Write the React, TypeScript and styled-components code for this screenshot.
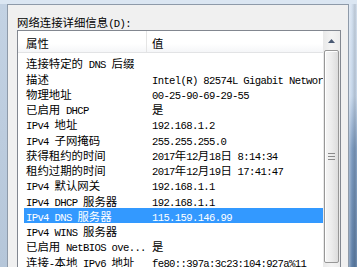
import React from 'react';
import styled, { createGlobalStyle } from 'styled-components';

const GlobalStyle = createGlobalStyle`
  html, body {
    margin: 0;
    padding: 0;
    overflow: hidden;
  }
  body {
    background: #c4d3e4;
  }
  * {
    box-sizing: border-box;
  }
`;

const Frame = styled.div`
  width: 357px;
  height: 267px;
  overflow: hidden;
  display: flex;
  padding: 4px 0 0 7px;
  background: linear-gradient(180deg, #dbe6f2 0, #dbe6f2 4px, #c3d2e3 4px, #b5c6d9 100%);
`;

const Dialog = styled.div`
  flex: 0 0 342px;
  min-width: 0;
  overflow: hidden;
  display: flex;
  flex-direction: column;
  padding: 10px 7px 0 9px;
  background: #f0f0f0;
  border: 1px solid #8e9aa9;
  border-bottom: none;
`;

const RightEdge = styled.div`
  flex: 1;
  background:
    linear-gradient(90deg, rgba(255, 255, 255, 0.35) 0, rgba(255, 255, 255, 0) 3px, rgba(0, 0, 0, 0.12) 6px, rgba(255, 255, 255, 0.1) 8px),
    linear-gradient(180deg, #d3e0ef 0, #c5d6ea 35%, #7e9cc1 55%, #5f80a8 100%);
`;

const Label = styled.div`
  height: 14px;
  line-height: 14px;
  margin-bottom: 1px;
  color: #000;
  white-space: nowrap;
`;

const ListBox = styled.div`
  display: flex;
  width: 100%;
  height: 250px;
  border: 1px solid #828790;
  background: #fff;
`;

const ListContent = styled.div`
  flex: 1;
  width: 0;
  min-width: 0;
  overflow: hidden;
  display: flex;
  flex-direction: column;
`;

const Header = styled.div`
  display: flex;
  height: 22px;
  border-bottom: 1px solid #e2e3e5;
  background: linear-gradient(180deg, #ffffff 0, #ffffff 60%, #f5f6f8 100%);
`;

const HeaderCell = styled.div<{ $width?: number; $pad: number }>`
  ${(p) => (p.$width ? `width: ${p.$width}px;` : 'flex: 1;')}
  padding: 2px 0 0 ${(p) => p.$pad}px;
  line-height: 19px;
  white-space: nowrap;
  border-right: ${(p) => (p.$width ? '1px solid #e5e5e5' : 'none')};
`;

const Rows = styled.div`
  padding-top: 2.4px;
`;

const Row = styled.div<{ $selected?: boolean }>`
  display: flex;
  height: 15.25px;
  line-height: 15.25px;
  margin-left: 6px;
  white-space: nowrap;
  overflow: hidden;
  color: ${(p) => (p.$selected ? '#fff' : '#000')};
  background: ${(p) => (p.$selected ? '#3399ff' : 'transparent')};
`;

const PropCell = styled.div`
  flex: 0 0 122px;
  padding-left: 2px;
  overflow: hidden;
`;

const ValueCell = styled.div`
  flex: 1;
  min-width: 0;
  padding-left: 6px;
  overflow: hidden;
`;

const Han = styled.span`
  font-family: 'Noto Sans CJK SC', sans-serif;
  font-size: 11.4px;
`;

const Lat = styled.span`
  font-family: 'Liberation Mono', monospace;
  font-size: 10.6px;
  letter-spacing: -0.65px;
`;

const ScrollBar = styled.div`
  flex: 0 0 17px;
  display: flex;
  flex-direction: column;
  background: linear-gradient(90deg, #e9e9e9 0, #f3f3f3 50%, #ececec 100%);
`;

const ArrowButton = styled.div`
  height: 17px;
  display: flex;
  align-items: center;
  justify-content: center;
  padding-top: 3px;
`;

const Thumb = styled.div`
  height: 213px;
  margin: 2px 1px 0 1px;
  display: flex;
  align-items: center;
  justify-content: center;
  border: 1px solid #979797;
  border-radius: 2px;
  background: linear-gradient(90deg, #f6f6f6 0, #ececec 50%, #dcdcdc 100%);
  box-shadow: inset 1px 1px 0 #ffffff;
`;

const Txt = ({ children }: { children: string }) => (
  <>
    {children.split(/([\u3000-\u9fff\uff00-\uffef]+)/).map((part, i) =>
      part === '' ? null : /[\u3000-\u9fff\uff00-\uffef]/.test(part) ? (
        <Han key={i}>{part}</Han>
      ) : (
        <Lat key={i}>{part}</Lat>
      )
    )}
  </>
);

const details: { prop: string; value: string }[] = [
  { prop: '连接特定的 DNS 后缀', value: '' },
  { prop: '描述', value: 'Intel(R) 82574L Gigabit Network Connection' },
  { prop: '物理地址', value: '00-25-90-69-29-55' },
  { prop: '已启用 DHCP', value: '是' },
  { prop: 'IPv4 地址', value: '192.168.1.2' },
  { prop: 'IPv4 子网掩码', value: '255.255.255.0' },
  { prop: '获得租约的时间', value: '2017年12月18日 8:14:34' },
  { prop: '租约过期的时间', value: '2017年12月19日 17:41:47' },
  { prop: 'IPv4 默认网关', value: '192.168.1.1' },
  { prop: 'IPv4 DHCP 服务器', value: '192.168.1.1' },
  { prop: 'IPv4 DNS 服务器', value: '115.159.146.99' },
  { prop: 'IPv4 WINS 服务器', value: '' },
  { prop: '已启用 NetBIOS ove...', value: '是' },
  { prop: '连接-本地 IPv6 地址', value: 'fe80::397a:3c23:104:927a%11' },
];

const SELECTED = 10;

export default function App() {
  return (
    <>
      <GlobalStyle />
      <Frame>
        <Dialog>
          <Label>
            <Txt>网络连接详细信息(D):</Txt>
          </Label>
          <ListBox>
            <ListContent>
              <Header>
                <HeaderCell $width={129} $pad={8}>
                  <Txt>属性</Txt>
                </HeaderCell>
                <HeaderCell $pad={5}>
                  <Txt>值</Txt>
                </HeaderCell>
              </Header>
              <Rows>
                {details.map((item, index) => (
                  <Row key={index} $selected={index === SELECTED}>
                    <PropCell>
                      <Txt>{item.prop}</Txt>
                    </PropCell>
                    <ValueCell>
                      <Txt>{item.value}</Txt>
                    </ValueCell>
                  </Row>
                ))}
              </Rows>
            </ListContent>
            <ScrollBar>
              <ArrowButton>
                <svg width="7" height="4" viewBox="0 0 7 4">
                  <path d="M0 4 L3.5 0 L7 4 Z" fill="#4a5a74" />
                </svg>
              </ArrowButton>
              <Thumb>
                <svg width="7" height="7" viewBox="0 0 7 7">
                  <path d="M0 0.5 H7 M0 3.5 H7 M0 6.5 H7" stroke="#8a8a8a" strokeWidth="1" />
                </svg>
              </Thumb>
            </ScrollBar>
          </ListBox>
        </Dialog>
        <RightEdge />
      </Frame>
    </>
  );
}
